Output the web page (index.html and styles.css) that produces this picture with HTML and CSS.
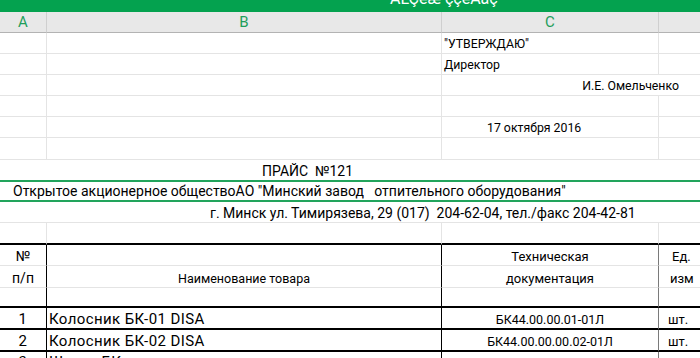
FILE: index.html
```html
<!DOCTYPE html>
<html lang="ru">
<head>
<meta charset="utf-8">
<title>Прайс</title>
<link rel="stylesheet" href="styles.css">
</head>
<body>
<div class="topbar"><span class="title">ÀĽÇéæ ççéÀàç</span></div>
<div class="sheet">
  <div class="ch">A</div><div class="ch">B</div><div class="ch">C</div><div class="ch">D</div>

  <div class="c"></div><div class="c"></div><div class="c sm">"УТВЕРЖДАЮ"</div><div class="c"></div>
  <div class="c"></div><div class="c"></div><div class="c sm">Директор</div><div class="c"></div>
  <div class="c"></div><div class="c"></div><div class="c span2 sm sign">И.Е. Омельченко</div>
  <div class="c"></div><div class="c"></div><div class="c"></div><div class="c"></div>
  <div class="c"></div><div class="c"></div><div class="c sm date">17 октября 2016</div><div class="c"></div>
  <div class="c"></div><div class="c"></div><div class="c"></div><div class="c"></div>

  <div class="c full gb lg price">ПРАЙС &nbsp;№121</div>
  <div class="c full gb lg org">Открытое акционерное обществоАО "Минский завод &nbsp; отпительного оборудования"</div>
  <div class="c full lg addr">г. Минск ул. Тимирязева, 29 (017) &nbsp;204-62-04, тел./факс 204-42-81</div>

  <div class="c bb"></div><div class="c bb"></div><div class="c bb"></div><div class="c bb"></div>

  <div class="c vA lg ctr">№</div><div class="c vB"></div><div class="c vC ctr">Техническая</div><div class="c vD unit">Ед.</div>
  <div class="c vA lg ctr">п/п</div><div class="c vB ctr name">Наименование товара</div><div class="c vC ctr">документация</div><div class="c vD meas">изм</div>
  <div class="c vA bb"></div><div class="c vB bb"></div><div class="c vC bb"></div><div class="c vD bb"></div>

  <div class="c vA bb ctr item">1</div><div class="c vB bb item">Колосник БК-01 DISA</div><div class="c vC bb ctr code">БК44.00.00.01-01Л</div><div class="c vD bb pcs">шт.</div>
  <div class="c vA bb ctr item">2</div><div class="c vB bb item">Колосник БК-02 DISA</div><div class="c vC bb ctr code">БК44.00.00.00.02-01Л</div><div class="c vD bb pcs">шт.</div>
  <div class="c vA bb ctr item top">3</div><div class="c vB bb item top">Шиток БК</div><div class="c vC bb"></div><div class="c vD bb"></div>
</div>
</body>
</html>
```

FILE: styles.css
```css
* { box-sizing: border-box; }
html, body { margin: 0; padding: 0; }
body {
  width: 700px;
  height: 358px;
  overflow: hidden;
  background: #fff;
  font-family: Roboto, "Noto Sans", sans-serif;
  font-size: 13px;
  color: #000;
}
.topbar {
  height: 12px;
  background: #04a24f;
  overflow: hidden;
  padding-left: 390px;
}
.title {
  display: block;
  margin-top: -9px;
  line-height: 16px;
  font-size: 16px;
  color: #fff;
  white-space: nowrap;
}
.sheet {
  display: grid;
  width: 759px;
  grid-template-columns: 47px 395px 217px 100px;
  grid-template-rows: 21px 21px 21px 21px 21px 21px 22px 22px 20px 21px 22px 21px 22px 20px 22px 22px 22px;
}
.ch {
  background: #e8e8e8;
  border-right: 1px solid #cfcfcf;
  border-bottom: 1px solid #b3b3b3;
  color: #1f9e5b;
  font-size: 15px;
  display: flex;
  align-items: center;
  justify-content: center;
}
.c {
  border-right: 1px solid #e4e4e4;
  border-bottom: 1px solid #e4e4e4;
  display: flex;
  align-items: flex-end;
  padding: 0 2px 1px;
  line-height: 15px;
  white-space: nowrap;
}
.sm { font-size: 12.3px; }
.lg { font-size: 14px; }
.ctr { justify-content: center; }
.span2 { grid-column: span 2; }
.sign { justify-content: flex-end; padding-right: 79px; }
.date { padding-left: 45px; }
.full { grid-column: 1 / -1; border-right: none; }
.gb { border-bottom: 2px solid #22a45c; }
.price { padding-left: 262px; }
.org { padding-left: 13px; }
.addr { padding-left: 210px; }
.bb { border-bottom: 2px solid #000; }
.vA, .vB { border-right: 1px solid #000; }
.vC { border-right: 1px solid #7a7a7a; }
.unit { padding-left: 13px; }
.meas { padding-left: 11px; }
.pcs { padding-left: 9px; }
.name { font-size: 12.5px; }
.item { font-size: 15px; letter-spacing: 0.4px; }
.code { font-size: 12.5px; }
.top { align-items: flex-start; padding-top: 3px; }
```
